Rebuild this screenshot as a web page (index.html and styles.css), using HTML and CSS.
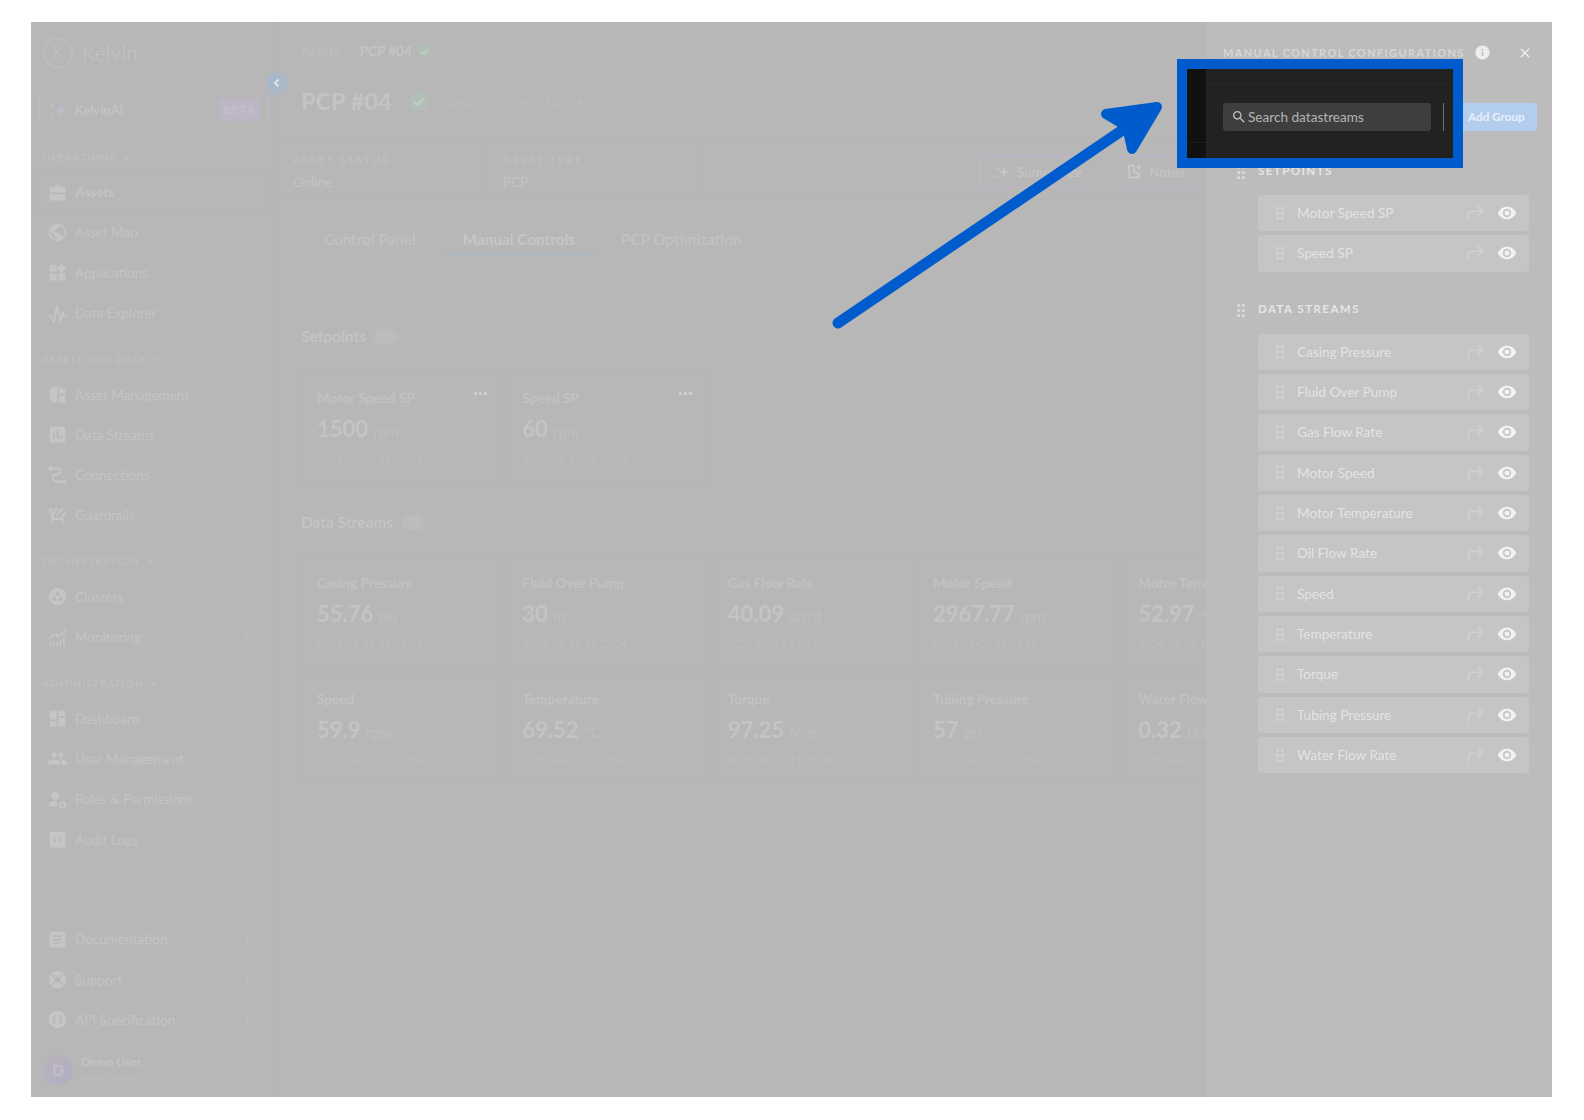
FILE: index.html
```html
<!DOCTYPE html>
<html lang="en">
<head>
<meta charset="utf-8">
<title>PCP #04 - Manual Controls</title>
<link rel="stylesheet" href="styles.css">
</head>
<body>
<svg class="defs" width="0" height="0" aria-hidden="true">
  <defs>
    <symbol id="i-assets" viewBox="0 0 24 24"><path d="M9.500 2.500h2v3h2v-3h2v3H21v6.500H3V5.500h6.500zM3 14h18v7H3z"/></symbol>
    <symbol id="i-public" viewBox="0 0 24 24"><path d="M12 2C6.480 2 2 6.480 2 12s4.480 10 10 10 10-4.480 10-10S17.520 2 12 2zm-1 17.930c-3.950-.49-7-3.850-7-7.930 0-.62.080-1.210.210-1.790L9 15v1c0 1.100.9 2 2 2v1.930zm6.900-2.540c-.26-.81-1-1.390-1.900-1.390h-1v-3c0-.55-.45-1-1-1H8v-2h2c.55 0 1-.45 1-1V7h2c1.100 0 2-.9 2-2v-.41c2.930 1.190 5 4.060 5 7.410 0 2.080-.8 3.970-2.100 5.390z"/></symbol>
    <symbol id="i-widgets" viewBox="0 0 24 24"><path d="M13 13v8h8v-8h-8zM3 21h8v-8H3v8zM3 3v8h8V3H3zm13.660-1.310L11 7.340 16.660 13l5.660-5.660-5.660-5.650z"/></symbol>
    <symbol id="i-pulse" viewBox="0 0 24 24"><path d="M2 14h2.500l2 5.500L10.500 3h2l3 14 2-7.500h1.500l1 4H23v2h-4l-.5-1.500-2 7.500h-1.500L12 8.500 8.500 22.500H7L3.500 16H2z"/></symbol>
    <symbol id="i-manage" viewBox="0 0 24 24"><path d="M14 3h2.500l1 2.500H21V11h-7zM14 13h7v8h-7zM6 3h6v18H6v-3H3.500L2 16.500 3.500 14 2 12l1.500-2.500L2 7.500 3.500 5H6z"/></symbol>
    <symbol id="i-assess" viewBox="0 0 24 24"><path d="M19 3H5c-1.100 0-2 .9-2 2v14c0 1.100.9 2 2 2h14c1.100 0 2-.9 2-2V5c0-1.100-.9-2-2-2zM9 17H7v-7h2v7zm4 0h-2V7h2v10zm4 0h-2v-4h2v4z"/></symbol>
    <symbol id="i-route" viewBox="0 0 24 24"><path d="M4 4h8c3 0 3.500 1.500 3.500 3 0 2-2 3.500-4.500 3.500-2.500 0-4.500 1-4.500 3.500S8.500 19 11 19h9" fill="none" stroke="currentColor" stroke-width="2.400"/><circle cx="4" cy="4" r="2.500"/><circle cx="20" cy="19" r="2.500"/></symbol>
    <symbol id="i-barrier" viewBox="0 0 24 24"><path fill-rule="evenodd" d="M2 4h20v8H2zM7 4l-5 6v2h.5L9.500 4zm6 0l-6.500 8h3L16 4zm6 0l-6.500 8h3L22 7V4zM5 12h2.500v2.500h9V12H19v9h-2.500v-4h-9v4H5z"/></symbol>
    <symbol id="i-cluster" viewBox="0 0 24 24"><path fill-rule="evenodd" d="M12 2a10 10 0 100 20 10 10 0 000-20zm0 5a2.200 2.200 0 110 4.400A2.200 2.200 0 0112 7zm-3.800 5.600a2.200 2.200 0 110 4.400 2.200 2.200 0 010-4.400zm7.600 0a2.200 2.200 0 110 4.400 2.200 2.200 0 010-4.400z"/></symbol>
    <symbol id="i-monitor" viewBox="0 0 24 24"><path d="M2.500 17h2v5h-2zM6.500 15h2v7h-2zM10.500 17h2v5h-2zM14.500 14h2v8h-2zM18.500 12h2v10h-2zM2 14l5-6 5 4 6-7 3-2.500.5 4-1.500-1-4 5-5-4-5 6-1.500 1z"/></symbol>
    <symbol id="i-dash" viewBox="0 0 24 24"><path d="M3 13h8V3H3v10zm0 8h8v-6H3v6zm10 0h8V11h-8v10zm0-18v6h8V3h-8z"/></symbol>
    <symbol id="i-people" viewBox="0 0 24 24"><path d="M16 11c1.660 0 2.990-1.340 2.990-3S17.660 5 16 5c-1.660 0-3 1.340-3 3s1.340 3 3 3zm-8 0c1.660 0 2.990-1.340 2.990-3S9.660 5 8 5C6.340 5 5 6.340 5 8s1.340 3 3 3zm0 2c-2.330 0-7 1.170-7 3.500V19h14v-2.500c0-2.330-4.670-3.500-7-3.500zm8 0c-.29 0-.62.020-.97.050 1.160.84 1.970 1.970 1.970 3.450V19h6v-2.500c0-2.330-4.670-3.500-7-3.500z"/></symbol>
    <symbol id="i-roles" viewBox="0 0 24 24"><circle cx="9.500" cy="7.500" r="4.500"/><path d="M2 20v-2c0-2.800 4-4.500 7.500-4.500 1 0 1.500.1 2 .2-.8 2-.5 4.300.8 6.300z"/><path fill-rule="evenodd" d="M18 13l.9 1.500 1.700-.3.400 1.700 1.500.9-.8 1.500.8 1.500-1.500.9-.4 1.700-1.700-.3L18 23.600l-.9-1.500-1.700.3-.4-1.700-1.500-.9.8-1.500-.8-1.500 1.500-.9.4-1.700 1.700.3zm0 3.500a1.800 1.800 0 100 3.600 1.800 1.800 0 000-3.600z"/></symbol>
    <symbol id="i-code" viewBox="0 0 24 24"><path fill-rule="evenodd" d="M5 3h14c1.100 0 2 .9 2 2v14c0 1.100-.9 2-2 2H5c-1.100 0-2-.9-2-2V5c0-1.100.9-2 2-2zm5 6l-3 3 3 3 1-1-2-2 2-2zm4 0l-1 1 2 2-2 2 1 1 3-3z"/></symbol>
    <symbol id="i-doc" viewBox="0 0 24 24"><path d="M19 3H5c-1.100 0-2 .9-2 2v14c0 1.100.9 2 2 2h14c1.100 0 2-.9 2-2V5c0-1.100-.9-2-2-2zm-5 14H7v-2h7v2zm3-4H7v-2h10v2zm0-4H7V7h10v2z"/></symbol>
    <symbol id="i-support" viewBox="0 0 24 24"><path fill-rule="evenodd" d="M12 2a10 10 0 100 20 10 10 0 000-20zm0 6.500a3.500 3.500 0 110 7 3.500 3.500 0 010-7zM6.500 5.500l3 3-1.200 1.200-2.700-2.700zm11 0l.9 1.500-2.700 2.700-1.200-1.200zM8.300 14.300l1.200 1.200-3 3-.9-1.500zm7.400 0l2.700 2.700-.9 1.500-3-3z"/></symbol>
    <symbol id="i-api" viewBox="0 0 24 24"><path fill-rule="evenodd" d="M12 2a10 10 0 100 20 10 10 0 000-20zM8.500 7.500H10V9c-1 0-1 .6-1 3s0 3 1 3v1.500H8.500C7 16.500 7 14.500 7 12s0-4.500 1.500-4.500zm5.500 0h1.500C17 7.500 17 9.500 17 12s0 4.500-1.500 4.500H14V15c1 0 1-.6 1-3s0-3-1-3zM10.500 11.300h1.200v1.400h-1.200zm2 0h1.200v1.400h-1.200z"/></symbol>
    <symbol id="i-ext" viewBox="0 0 24 24"><path d="M19 19H5V5h7V3H5a2 2 0 00-2 2v14a2 2 0 002 2h14c1.100 0 2-.9 2-2v-7h-2v7zM14 3v2h3.590l-9.830 9.830 1.410 1.410L19 6.410V10h2V3h-7z"/></symbol>
    <symbol id="i-chev" viewBox="0 0 12 12"><path d="M2 4l4 4 4-4" fill="none" stroke="currentColor" stroke-width="1.800"/></symbol>
    <symbol id="i-spark" viewBox="0 0 24 24"><path d="M15 4l2 6 6 2-6 2-2 6-2-6-6-2 6-2zM5 3l1 2.500L8.500 6.500 6 7.500 5 10 4 7.500 1.500 6.500 4 5.500zM5 16l.8 2 2 .8-2 .8-.8 2-.8-2-2-.8 2-.8z"/></symbol>
    <symbol id="i-note" viewBox="0 0 24 24"><path fill-rule="evenodd" d="M5 2h7.500v9.500H17V14h3v6a2 2 0 01-2 2H5a2 2 0 01-2-2V4a2 2 0 012-2zm1 3v14h10v-4h-6V5z"/><path d="M18 1l1.300 3.700L23 6l-3.700 1.300L18 11l-1.300-3.700L13 6l3.700-1.300z"/></symbol>
    <symbol id="i-check" viewBox="0 0 24 24"><path d="M6 12.500l4.200 4.200L18 8.500" fill="none" stroke="currentColor" stroke-width="2.600"/></symbol>
    <symbol id="i-search" viewBox="0 0 24 24"><path d="M15.500 14h-.79l-.28-.27C15.410 12.590 16 11.110 16 9.500 16 5.910 13.090 3 9.500 3S3 5.910 3 9.500 5.910 16 9.500 16c1.610 0 3.090-.59 4.230-1.570l.27.28v.79l5 4.990L20.490 19l-4.990-5zm-6 0C7.010 14 5 11.990 5 9.500S7.010 5 9.500 5 14 7.010 14 9.500 11.990 14 9.500 14z"/></symbol>
    <symbol id="i-eye" viewBox="0 0 24 24"><path d="M12 4.500C7 4.500 2.730 7.610 1 12c1.730 4.390 6 7.500 11 7.500s9.270-3.110 11-7.500c-1.730-4.390-6-7.500-11-7.500zM12 17c-2.760 0-5-2.240-5-5s2.240-5 5-5 5 2.240 5 5-2.240 5-5 5zm0-8c-1.660 0-3 1.340-3 3s1.340 3 3 3 3-1.340 3-3-1.340-3-3-3z"/></symbol>
    <symbol id="i-info" viewBox="0 0 24 24"><path d="M12 2C6.480 2 2 6.480 2 12s4.480 10 10 10 10-4.480 10-10S17.520 2 12 2zm1 15h-2v-6h2v6zm0-8h-2V7h2v2z"/></symbol>
    <symbol id="i-close" viewBox="0 0 24 24"><path d="M19 6.410L17.590 5 12 10.590 6.410 5 5 6.410 10.590 12 5 17.590 6.410 19 12 13.410 17.590 19 19 17.590 13.410 12z"/></symbol>
    <symbol id="i-share" viewBox="0 0 18 16"><path d="M1.500 15V9.500c0-2 1.300-3.200 3.200-3.200h11M11 1.500l4.800 4.800L11 11" fill="none" stroke="currentColor" stroke-width="1.800"/></symbol>
    <symbol id="i-grip" viewBox="0 0 8 14"><path d="M0 0h3v3H0zM5 0h3v3H5zM0 5.500h3v3H0zM5 5.500h3v3H5zM0 11h3v3H0zM5 11h3v3H5z"/></symbol>
  </defs>
</svg>

<div class="app">
  <aside class="sidebar">
    <div class="brand">
      <span class="logo">K</span>
      <span class="wordmark">Kelvin</span>
      <span class="env">BETA ENVIRONMENT</span>
    </div>
    <div class="ai-box">
      <svg class="ico"><use href="#i-spark"/></svg>
      <span class="ai-label">KelvinAI</span>
      <span class="beta">BETA</span>
    </div>

    <div class="nav-head nav-head-first">OPERATIONS <svg class="chev"><use href="#i-chev"/></svg></div>
    <a class="nav-row is-active"><svg class="ico"><use href="#i-assets"/></svg><span>Assets</span></a>
    <a class="nav-row"><svg class="ico"><use href="#i-public"/></svg><span>Asset Map</span></a>
    <a class="nav-row"><svg class="ico"><use href="#i-widgets"/></svg><span>Applications</span></a>
    <a class="nav-row"><svg class="ico"><use href="#i-pulse"/></svg><span>Data Explorer</span></a>

    <div class="nav-head">ASSETS AND DATA <svg class="chev"><use href="#i-chev"/></svg></div>
    <a class="nav-row"><svg class="ico"><use href="#i-manage"/></svg><span>Asset Management</span></a>
    <a class="nav-row"><svg class="ico"><use href="#i-assess"/></svg><span>Data Streams</span></a>
    <a class="nav-row"><svg class="ico"><use href="#i-route"/></svg><span>Connections</span></a>
    <a class="nav-row"><svg class="ico"><use href="#i-barrier"/></svg><span>Guardrails</span></a>

    <div class="nav-head">ORCHESTRATION <svg class="chev"><use href="#i-chev"/></svg></div>
    <a class="nav-row"><svg class="ico"><use href="#i-cluster"/></svg><span>Clusters</span></a>
    <a class="nav-row"><svg class="ico"><use href="#i-monitor"/></svg><span>Monitoring</span><svg class="ext"><use href="#i-ext"/></svg></a>

    <div class="nav-head">ADMINISTRATION <svg class="chev"><use href="#i-chev"/></svg></div>
    <a class="nav-row"><svg class="ico"><use href="#i-dash"/></svg><span>Dashboard</span></a>
    <a class="nav-row"><svg class="ico"><use href="#i-people"/></svg><span>User Management</span></a>
    <a class="nav-row"><svg class="ico"><use href="#i-roles"/></svg><span>Roles &amp; Permissions</span></a>
    <a class="nav-row"><svg class="ico"><use href="#i-code"/></svg><span>Audit Logs</span><svg class="ext"><use href="#i-ext"/></svg></a>

    <div class="nav-foot">
      <a class="nav-row"><svg class="ico"><use href="#i-doc"/></svg><span>Documentation</span><svg class="ext"><use href="#i-ext"/></svg></a>
      <a class="nav-row"><svg class="ico"><use href="#i-support"/></svg><span>Support</span><svg class="ext"><use href="#i-ext"/></svg></a>
      <a class="nav-row"><svg class="ico"><use href="#i-api"/></svg><span>API Specification</span><svg class="ext"><use href="#i-ext"/></svg></a>
      <div class="user">
        <span class="avatar">D</span>
        <div class="user-text">
          <div class="user-name">Demo User</div>
          <div class="user-mail">demo@kelvin.ai</div>
        </div>
      </div>
    </div>
  </aside>

  <main class="main">
    <div class="crumbs">
      <span class="crumb-link">Assets</span>
      <span class="crumb-sep">/</span>
      <span class="crumb-now">PCP #04</span>
      <span class="ok ok-small"><svg><use href="#i-check"/></svg></span>
    </div>
    <div class="title-row">
      <h1 class="title">PCP #04</h1>
      <span class="ok ok-big"><svg><use href="#i-check"/></svg></span>
      <span class="updated">Updated at 13 Apr 11:23:04</span>
    </div>
    <div class="facts">
      <div class="fact fact-a">
        <div class="fact-label">ASSET STATUS</div>
        <div class="fact-value">Online</div>
      </div>
      <div class="fact fact-b">
        <div class="fact-label">ASSET TYPE</div>
        <div class="fact-value">PCP</div>
      </div>
      <div class="fact-actions">
        <span class="ghost-btn btn-sum"><svg class="btn-ico"><use href="#i-spark"/></svg>Summarize</span>
        <span class="ghost-btn btn-note"><svg class="btn-ico"><use href="#i-note"/></svg>Notes</span>
      </div>
    </div>
    <div class="tabs">
      <span class="tab">Control Panel</span>
      <span class="tab is-current">Manual Controls</span>
      <span class="tab">PCP Optimization</span>
    </div>

    <h2 class="sec-title sec-setpoints">Setpoints <span class="count">2</span></h2>
    <div class="card-grid grid-setpoints">
      <div class="card">
        <span class="dots"></span>
        <div class="card-name">Motor Speed SP</div>
        <div class="card-val">1500 <small>rpm</small></div>
        <div class="card-time">2024-02-06 14:16:54</div>
      </div>
      <div class="card">
        <span class="dots"></span>
        <div class="card-name">Speed SP</div>
        <div class="card-val">60 <small>rpm</small></div>
        <div class="card-time">2025-04-13 11:23:04</div>
      </div>
    </div>

    <h2 class="sec-title sec-streams">Data Streams <span class="count">11</span></h2>
    <div class="card-grid grid-streams">
      <div class="card"><div class="card-name">Casing Pressure</div><div class="card-val">55.76 <small>psi</small></div><div class="card-time">2025-04-13 11:23:04</div></div>
      <div class="card"><div class="card-name">Fluid Over Pump</div><div class="card-val">30 <small>m</small></div><div class="card-time">2025-04-13 11:23:04</div></div>
      <div class="card"><div class="card-name">Gas Flow Rate</div><div class="card-val">40.09 <small>scf/d</small></div><div class="card-time">2025-04-13 11:23:04</div></div>
      <div class="card"><div class="card-name">Motor Speed</div><div class="card-val">2967.77 <small>rpm</small></div><div class="card-time">2023-09-07 11:01:19</div></div>
      <div class="card"><div class="card-name">Motor Temperature</div><div class="card-val">52.97 <small>°C</small></div><div class="card-time">2024-02-06 14:16:54</div></div>
      <div class="card"><div class="card-name">Speed</div><div class="card-val">59.9 <small>rpm</small></div><div class="card-time">2025-04-13 11:23:04</div></div>
      <div class="card"><div class="card-name">Temperature</div><div class="card-val">69.52 <small>°C</small></div><div class="card-time">2025-04-13 11:23:04</div></div>
      <div class="card"><div class="card-name">Torque</div><div class="card-val">97.25 <small>N·m</small></div><div class="card-time">2025-04-13 11:23:04</div></div>
      <div class="card"><div class="card-name">Tubing Pressure</div><div class="card-val">57 <small>psi</small></div><div class="card-time">2025-04-13 11:23:04</div></div>
      <div class="card"><div class="card-name">Water Flow Rate</div><div class="card-val">0.32 <small>bbl/d</small></div><div class="card-time">2025-04-13 11:23:04</div></div>
    </div>
  </main>

  <aside class="panel">
    <header class="panel-head">
      <span class="panel-title">MANUAL CONTROL CONFIGURATIONS</span>
      <svg class="panel-info"><use href="#i-info"/></svg>
      <svg class="panel-close"><use href="#i-close"/></svg>
    </header>
    <div class="toolbar">
      <div class="search">
        <svg class="search-ico"><use href="#i-search"/></svg>
        <span>Search datastreams</span>
      </div>
      <span class="tool-div"></span>
      <span class="add-btn">Add Group</span>
    </div>

    <section class="group">
      <div class="group-head"><svg class="grip grip-head"><use href="#i-grip"/></svg><span>SETPOINTS</span></div>
      <div class="item"><svg class="grip"><use href="#i-grip"/></svg><span class="item-name">Motor Speed SP</span><svg class="share"><use href="#i-share"/></svg><svg class="eye"><use href="#i-eye"/></svg></div>
      <div class="item"><svg class="grip"><use href="#i-grip"/></svg><span class="item-name">Speed SP</span><svg class="share"><use href="#i-share"/></svg><svg class="eye"><use href="#i-eye"/></svg></div>
    </section>

    <section class="group">
      <div class="group-head"><svg class="grip grip-head"><use href="#i-grip"/></svg><span>DATA STREAMS</span></div>
      <div class="item"><svg class="grip"><use href="#i-grip"/></svg><span class="item-name">Casing Pressure</span><svg class="share"><use href="#i-share"/></svg><svg class="eye"><use href="#i-eye"/></svg></div>
      <div class="item"><svg class="grip"><use href="#i-grip"/></svg><span class="item-name">Fluid Over Pump</span><svg class="share"><use href="#i-share"/></svg><svg class="eye"><use href="#i-eye"/></svg></div>
      <div class="item"><svg class="grip"><use href="#i-grip"/></svg><span class="item-name">Gas Flow Rate</span><svg class="share"><use href="#i-share"/></svg><svg class="eye"><use href="#i-eye"/></svg></div>
      <div class="item"><svg class="grip"><use href="#i-grip"/></svg><span class="item-name">Motor Speed</span><svg class="share"><use href="#i-share"/></svg><svg class="eye"><use href="#i-eye"/></svg></div>
      <div class="item"><svg class="grip"><use href="#i-grip"/></svg><span class="item-name">Motor Temperature</span><svg class="share"><use href="#i-share"/></svg><svg class="eye"><use href="#i-eye"/></svg></div>
      <div class="item"><svg class="grip"><use href="#i-grip"/></svg><span class="item-name">Oil Flow Rate</span><svg class="share"><use href="#i-share"/></svg><svg class="eye"><use href="#i-eye"/></svg></div>
      <div class="item"><svg class="grip"><use href="#i-grip"/></svg><span class="item-name">Speed</span><svg class="share"><use href="#i-share"/></svg><svg class="eye"><use href="#i-eye"/></svg></div>
      <div class="item"><svg class="grip"><use href="#i-grip"/></svg><span class="item-name">Temperature</span><svg class="share"><use href="#i-share"/></svg><svg class="eye"><use href="#i-eye"/></svg></div>
      <div class="item"><svg class="grip"><use href="#i-grip"/></svg><span class="item-name">Torque</span><svg class="share"><use href="#i-share"/></svg><svg class="eye"><use href="#i-eye"/></svg></div>
      <div class="item"><svg class="grip"><use href="#i-grip"/></svg><span class="item-name">Tubing Pressure</span><svg class="share"><use href="#i-share"/></svg><svg class="eye"><use href="#i-eye"/></svg></div>
      <div class="item"><svg class="grip"><use href="#i-grip"/></svg><span class="item-name">Water Flow Rate</span><svg class="share"><use href="#i-share"/></svg><svg class="eye"><use href="#i-eye"/></svg></div>
    </section>
  </aside>

  <button class="collapse" type="button" aria-label="Collapse sidebar">
    <svg viewBox="0 0 12 12"><path d="M7.500 2.500L4 6l3.500 3.500" fill="none" stroke="currentColor" stroke-width="2"/></svg>
  </button>
  <div class="spotlight"></div>
  <svg class="arrow" viewBox="0 0 340 240" aria-hidden="true">
    <path class="arrow-shaft" d="M8 223L297 27"/>
    <path class="arrow-head" d="M276 14L327 7 302 49 297 26.500z"/>
  </svg>
</div>
</body>
</html>
```

FILE: styles.css
```css
* { box-sizing: border-box; }

html, body { margin: 0; padding: 0; }

body {
  width: 1584px;
  height: 1120px;
  background: #fff;
  font-family: "Lato", "Open Sans", sans-serif;
  overflow: hidden;
}

.defs { position: absolute; }

.app {
  position: relative;
  display: flex;
  width: 1521px;
  height: 1075px;
  margin: 22px 0 0 31px;
  background: #b7b7b7;
  color: #c4c4c4;
  overflow: hidden;
}

/* sidebar */
.sidebar {
  display: flex;
  flex-direction: column;
  flex: 0 0 247px;
  padding: 0 8px;
  border-right: 1px solid #b5b5b5;
}

.brand {
  display: flex;
  align-items: center;
  height: 69px;
  padding: 0 0 8px 4px;
}

.logo {
  display: flex;
  align-items: center;
  justify-content: center;
  width: 30px;
  height: 30px;
  border: 1.500px solid #c2c2c2;
  border-radius: 50%;
  font-size: 17px;
  font-weight: 300;
}

.wordmark {
  margin-left: 9px;
  font-size: 21px;
  font-weight: 300;
  letter-spacing: .2px;
}

.env {
  margin: 5px 0 0 8px;
  font-size: 8.800px;
  letter-spacing: .5px;
  color: #bababa;
  white-space: nowrap;
}

.ai-box {
  display: flex;
  align-items: center;
  height: 38px;
  padding: 0 8px 0 8px;
  border: 1px solid #bdb8c3;
  border-radius: 3px;
  font-size: 13px;
  font-weight: 600;
}

.ai-label { margin-left: 6px; }

.beta {
  margin-left: auto;
  width: 41px;
  height: 22px;
  border-radius: 3px;
  background: #bcb6c6;
  color: #c4bfce;
  font-size: 11.500px;
  font-weight: 700;
  letter-spacing: 1.200px;
  line-height: 22px;
  text-align: center;
}

.nav-head {
  display: flex;
  align-items: center;
  gap: 5px;
  height: 20px;
  margin: 15.500px 0 5.700px;
  padding-left: 3px;
  color: #bfbfbf;
  font-size: 10px;
  font-weight: 700;
  letter-spacing: 1.100px;
}

.nav-head-first { margin: 18px 0 5px; }

.chev { width: 10px; height: 10px; color: #c0c0c0; }

.nav-row {
  display: flex;
  align-items: center;
  height: 40.300px;
  padding: 0 11px 0 8px;
  font-size: 13.500px;
}

.nav-row.is-active {
  position: relative;
  font-weight: 700;
}

.nav-row.is-active::before {
  content: "";
  position: absolute;
  inset: 1px 0;
  border: 1px solid #b5b5b5;
  border-radius: 3px;
}

.ico {
  flex: none;
  width: 21px;
  height: 21px;
  margin-right: 7px;
  fill: #c5c5c5;
  color: #c5c5c5;
}

.ai-box .ico { margin-right: 0; fill: #c0bbc8; }

.ext {
  flex: none;
  width: 13px;
  height: 13px;
  margin-left: auto;
  fill: #bcbcbc;
}

.nav-foot { margin-top: auto; }

.user {
  display: flex;
  align-items: center;
  height: 57px;
  padding: 3px 0 0 4px;
}

.avatar {
  display: flex;
  align-items: center;
  justify-content: center;
  width: 30px;
  height: 30px;
  border-radius: 50%;
  background: linear-gradient(135deg, #bcb1b8, #acb0c6);
  color: #c6c1cc;
  font-size: 15px;
}

.user-text { margin-left: 8px; }
.user-name { font-size: 12px; font-weight: 700; line-height: 17px; }
.user-mail { color: #bdbdbd; font-size: 10px; line-height: 17px; }

/* main column */
.main {
  flex: 0 0 928px;
  overflow: hidden;
}

.crumbs {
  display: flex;
  align-items: center;
  gap: 7px;
  height: 20px;
  margin: 19px 0 0 23px;
  font-size: 13.500px;
}

.crumb-link, .crumb-sep { color: #bfbfbf; }
.crumb-now { font-weight: 700; }

.ok {
  display: flex;
  align-items: center;
  justify-content: center;
  border-radius: 50%;
  background: #b1bfb6;
  color: #c5cec8;
}

.ok svg { width: 100%; height: 100%; }
.ok-small { width: 13px; height: 13px; margin-left: -1px; }
.ok-big { width: 20px; height: 20px; margin-left: 17px; }

.title-row {
  display: flex;
  align-items: center;
  height: 30px;
  margin: 25px 0 0 23px;
}

.title {
  margin: 0;
  font-size: 23.500px;
  font-weight: 700;
  line-height: 30px;
}

.updated {
  margin-left: 18px;
  color: #bdbdbd;
  font-size: 11px;
}

.facts {
  display: flex;
  height: 58px;
  margin-top: 26px;
  border-top: 1px solid #b5b5b5;
  border-bottom: 1px solid #b5b5b5;
}

.fact {
  padding-top: 9px;
  border-right: 1px solid #b5b5b5;
}

.fact-a { flex: 0 0 209px; padding-left: 15px; }
.fact-b { flex: 0 0 211px; padding-left: 16px; }

.fact-label {
  height: 16px;
  color: #bfbfbf;
  font-size: 10.500px;
  font-weight: 600;
  letter-spacing: 2.200px;
  line-height: 16px;
}

.fact-value {
  margin-top: 5px;
  font-size: 13.500px;
  line-height: 18px;
}

.fact-actions {
  display: flex;
  flex: 1;
  justify-content: flex-end;
  gap: 13px;
  padding: 12px 6px 0 0;
}

.ghost-btn {
  display: flex;
  align-items: center;
  height: 33px;
  border: 2px solid #bdb6c2;
  border-radius: 3px;
  font-size: 13.500px;
  font-weight: 600;
}

.btn-sum { width: 119px; padding-left: 13px; }
.btn-note { width: 89px; padding-left: 13px; }

.btn-ico {
  flex: none;
  width: 16px;
  height: 16px;
  margin-right: 7px;
  fill: #c8c8c8;
}

.btn-note .btn-ico { width: 17px; height: 17px; margin-right: 6px; }

.tabs {
  display: flex;
  align-items: flex-end;
  height: 55px;
  margin-left: 23px;
  border-bottom: 1px solid #bbb;
  font-size: 15.300px;
  font-weight: 600;
}

.tab {
  height: 32px;
  padding: 6px 23px 0;
  line-height: 20px;
  margin-bottom: -1px;
  color: #c2c2c2;
  white-space: nowrap;
}

.tab.is-current {
  padding: 6px 23px 0 24px;
  border-bottom: 2px solid #aeb7c0;
  color: #c6c6c6;
  font-weight: 700;
}

.sec-title {
  display: flex;
  align-items: center;
  gap: 8px;
  height: 20px;
  margin: 0 0 0 23px;
  font-size: 15.500px;
  font-weight: 700;
  line-height: 20px;
}

.sec-setpoints { margin-top: 71px; }
.sec-streams { margin-top: 30px; }

.count {
  width: 23px;
  height: 15px;
  border-radius: 8px;
  background: #bcbcbc;
  color: #c0c0c0;
  font-size: 10px;
  line-height: 15px;
  text-align: center;
}

.card-grid {
  display: grid;
  grid-template-columns: repeat(5, 200px);
  grid-auto-rows: 110px;
  gap: 5.500px 5.330px;
  margin-left: 24px;
}

.grid-setpoints { margin-top: 26px; }
.grid-streams { margin-top: 25px; }

.card {
  position: relative;
  padding: 15px 14px;
  border: 1px solid #b5b5b5;
  border-radius: 3px;
}

.card-name {
  font-size: 13.600px;
  font-weight: 700;
  line-height: 20px;
  color: #c2c2c2;
  white-space: nowrap;
}

.card-val {
  margin-top: 6px;
  font-size: 22px;
  font-weight: 700;
  line-height: 30px;
  white-space: nowrap;
}

.card-val small {
  color: #bfbfbf;
  font-size: 14.500px;
  font-weight: 400;
}

.card-time {
  margin-top: 4px;
  color: #bdbdbd;
  font-size: 10.900px;
  line-height: 16px;
  white-space: nowrap;
}

.dots {
  position: absolute;
  top: 19px;
  right: 14px;
  width: 13px;
  height: 3px;
  background: radial-gradient(circle at 1.500px 1.500px, #cfcfcf 1.500px, transparent 1.600px) 0 0 / 5px 3px;
}

/* right panel */
.panel {
  flex: 0 0 346px;
  background: #bcbcbc;
}

.panel-head {
  display: flex;
  align-items: center;
  height: 62px;
  padding: 0 19px 0 17px;
  border-bottom: 1px solid #b9b9b9;
}

.panel-title {
  color: #d6d6d6;
  font-size: 11px;
  font-weight: 700;
  letter-spacing: 1.350px;
  white-space: nowrap;
}

.panel-info {
  flex: none;
  width: 17px;
  height: 17px;
  margin-left: auto;
  fill: #ededed;
}

.panel-close {
  flex: none;
  width: 16px;
  height: 16px;
  margin-left: 26px;
  fill: #efefef;
}

.toolbar {
  display: flex;
  align-items: center;
  height: 28px;
  margin-top: 19px;
  padding-left: 17px;
}

.search {
  position: relative;
  z-index: 2;
  display: flex;
  align-items: center;
  width: 208px;
  height: 28px;
  padding: 0 0 1px 8px;
  border-radius: 3px;
  background: #3e3e3e;
  color: #b4b4b4;
  font-size: 13.600px;
}

.search-ico {
  flex: none;
  width: 16px;
  height: 16px;
  margin-right: 1px;
  fill: #bfbfbf;
}

.tool-div {
  position: relative;
  z-index: 2;
  width: 1px;
  height: 28px;
  margin-left: 12px;
  background: #6e6e6e;
}

.add-btn {
  display: block;
  width: 85px;
  height: 28px;
  margin-left: 8px;
  padding-left: 16px;
  border-radius: 3px;
  background: #b3cdee;
  color: #e9f0fa;
  font-size: 11.700px;
  font-weight: 700;
  line-height: 27px;
}

.group {
  width: 314px;
  margin: 8px 0 0 17px;
  padding: 6px 8px 11px 0;
  border: 1px solid #b9b9b9;
  border-radius: 3px;
}

.toolbar + .group { margin-top: 22px; }

.group-head {
  display: flex;
  align-items: center;
  height: 20px;
  margin-bottom: 15px;
  color: #e6e6e6;
  font-size: 11.500px;
  font-weight: 700;
  letter-spacing: 1.450px;
}

.grip {
  flex: none;
  width: 8px;
  height: 13px;
  fill: #d2d2d2;
}

.grip-head {
  width: 8px;
  height: 13px;
  margin: 4px 13px 0 13px;
  fill: #d8d8d8;
}

.item {
  display: flex;
  align-items: center;
  width: 271px;
  height: 36.330px;
  margin: 0 0 4px 34px;
  padding: 0 12px 0 18px;
  border-radius: 3px;
  background: #c5c5c5;
}

.item:last-child { margin-bottom: 0; }

.item-name {
  margin-left: 13px;
  color: #e3e3e3;
  font-size: 13.600px;
  white-space: nowrap;
}

.share {
  flex: none;
  width: 18px;
  height: 16px;
  margin-left: auto;
  color: #cfcfcf;
}

.eye {
  flex: none;
  width: 20px;
  height: 20px;
  margin-left: 12px;
  fill: #f2f2f2;
}

/* overlays */
.collapse {
  position: absolute;
  top: 50px;
  left: 235px;
  width: 22px;
  height: 22px;
  padding: 5px;
  border: 0;
  border-radius: 50%;
  background: #a9b8c7;
  color: #dfe5ea;
}

.collapse svg { display: block; width: 12px; height: 12px; }

.spotlight {
  position: absolute;
  z-index: 1;
  top: 37px;
  left: 1146px;
  width: 286px;
  height: 109px;
  border: 10px solid #005ccc;
  background:
    linear-gradient(#2a2a2a, #2a2a2a) 19px 14px / 100% 1px no-repeat,
    linear-gradient(#1d1d1d, #1d1d1d) 0 73px / 19px 1px no-repeat,
    linear-gradient(to right, #111 19px, #222 19px);
}

.arrow {
  position: absolute;
  z-index: 3;
  top: 78px;
  left: 799px;
  width: 340px;
  height: 240px;
  overflow: visible;
}

.arrow-shaft {
  fill: none;
  stroke: #005ccc;
  stroke-width: 11;
  stroke-linecap: round;
}

.arrow-head {
  fill: #005ccc;
  stroke: #005ccc;
  stroke-width: 10;
  stroke-linejoin: round;
}
```
